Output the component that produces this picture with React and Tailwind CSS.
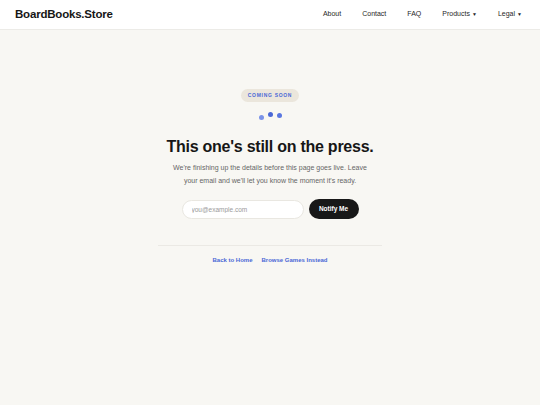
import React from "react";

const NavItem = ({ label, caret }) => (
  <a href="#" className="text-[7px] text-[#1f1f1f] flex items-center gap-[2px]">
    {label}
    {caret && <span className="text-[5px]">▼</span>}
  </a>
);

export default function App() {
  return (
    <div className="min-h-[405px] bg-[#f8f7f3] font-['Liberation_Sans',Arial,sans-serif] flex flex-col">
      <header className="h-[30px] bg-white border-b border-[#ecebe7] flex items-center justify-between pl-[15px] pr-[18px]">
        <div className="text-[11.5px] font-bold text-[#161616] tracking-[-0.2px]">BoardBooks.Store</div>
        <nav className="flex items-center gap-[21px]">
          <NavItem label="About" />
          <NavItem label="Contact" />
          <NavItem label="FAQ" />
          <NavItem label="Products" caret />
          <NavItem label="Legal" caret />
        </nav>
      </header>

      <main className="flex flex-col items-center pt-[59px]">
        <span className="h-[13px] px-[7px] rounded-full bg-[#ebe6dc] text-[#4a68d6] text-[5px] font-bold tracking-[0.7px] flex items-center">
          COMING SOON
        </span>

        <div className="flex items-start gap-[4px] mt-[10px] h-[8px]">
          <span className="w-[5px] h-[5px] rounded-full bg-[#7b93e8] mt-[3px]"></span>
          <span className="w-[5px] h-[5px] rounded-full bg-[#4a68d6]"></span>
          <span className="w-[5px] h-[5px] rounded-full bg-[#5a77e0] mt-[1px]"></span>
        </div>

        <h1 className="mt-[17px] text-[16px] font-bold text-[#161616] tracking-[-0.25px] leading-[20px]">
          This one's still on the press.
        </h1>

        <p className="mt-[5px] text-[7px] leading-[12.5px] text-[#666] text-center w-[196px]">
          We're finishing up the details before this page goes live. Leave your email and we'll let you know the moment it's ready.
        </p>

        <form className="mt-[12px] flex items-center gap-[5px]" onSubmit={(e) => e.preventDefault()}>
          <input
            type="email"
            placeholder="you@example.com"
            className="w-[122px] h-[19px] rounded-full bg-white border border-[#e9e7e1] px-[9px] text-[6.5px] text-[#333] placeholder:text-[#9a9a9a] outline-none"
          />
          <button className="w-[50px] h-[20px] rounded-full bg-[#181818] text-white text-[6.5px] font-bold">
            Notify Me
          </button>
        </form>

        <div className="mt-[26px] w-[224px] border-t border-[#ebe9e4]"></div>

        <div className="mt-[10px] flex items-center gap-[9px] text-[6px] font-bold text-[#4a68d6]">
          <a href="#">Back to Home</a>
          <a href="#">Browse Games Instead</a>
        </div>
      </main>
    </div>
  );
}
